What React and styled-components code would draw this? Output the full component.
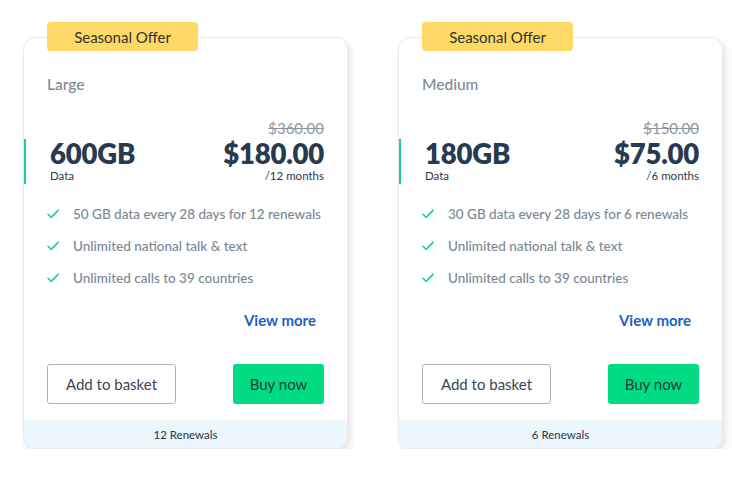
import React from "react";
import styled, { createGlobalStyle } from "styled-components";

const Global = createGlobalStyle`
  html, body { margin: 0; padding: 0; background: #ffffff; }
  body { font-family: Lato, "Open Sans", sans-serif; color: #2b3a4d; }
  * { box-sizing: border-box; }
`;

const Page = styled.div`
  display: flex;
  gap: 50px;
  padding: 37px 0 0 23px;
`;

const CardWrap = styled.div`
  position: relative;
  width: 325px;
`;

const Badge = styled.div`
  position: absolute;
  top: -15px;
  left: 24px;
  width: 151px;
  height: 29px;
  background: #ffd965;
  border-radius: 4px;
  display: flex;
  align-items: center;
  justify-content: center;
  font-size: 15px;
  color: #2f3338;
  z-index: 2;
`;

const Card = styled.div`
  height: 412px;
  border: 1px solid #e7e9ec;
  border-radius: 12px;
  background: #fff;
  box-shadow: 3px 4px 6px rgba(0, 0, 0, 0.1);
  display: flex;
  flex-direction: column;
  overflow: hidden;
`;

const Body = styled.div`
  flex: 1;
  padding: 36px 23px 0 23px;
  display: flex;
  flex-direction: column;
`;

const PlanName = styled.div`
  font-size: 15.5px;
  line-height: 20px;
  color: #7d8896;
  font-weight: 500;
`;

const PriceRow = styled.div`
  margin-top: 24px;
  display: flex;
  justify-content: space-between;
  align-items: flex-end;
`;

const DataBlock = styled.div`
  margin-left: -24px;
  padding-left: 24px;
  border-left: 3px solid #1fd08b;
  display: flex;
  flex-direction: column;
  height: 45px;
  justify-content: flex-start;
`;

const Big = styled.div`
  font-size: 27.5px;
  line-height: 30px;
  font-weight: 800;
  color: #273a50;
  letter-spacing: -0.2px;
`;

const Small = styled.div`
  font-size: 11.5px;
  line-height: 14px;
  color: #2b3a4d;
`;

const PriceBlock = styled.div`
  display: flex;
  flex-direction: column;
  align-items: flex-end;
  height: 66px;
`;

const OldPrice = styled.div`
  font-size: 15px;
  line-height: 20px;
  color: #8c97a4;
  text-decoration: line-through;
  margin-bottom: 1px;
`;

const Features = styled.ul`
  list-style: none;
  margin: 14px 0 0 0;
  padding: 0;
  display: flex;
  flex-direction: column;
`;

const Feature = styled.li`
  display: flex;
  align-items: center;
  gap: 14px;
  height: 32px;
  font-size: 13.5px;
  color: #7b8794;
  font-weight: 500;
`;

const ViewMore = styled.a`
  align-self: flex-end;
  margin: 16px 8px 0 0;
  font-size: 15px;
  line-height: 20px;
  font-weight: 700;
  color: #1b5fc9;
  text-decoration: none;
`;

const Actions = styled.div`
  margin-top: 34px;
  display: flex;
  justify-content: space-between;
`;

const OutlineButton = styled.button`
  height: 40px;
  width: 129px;
  border: 1px solid #a9b4c0;
  border-radius: 3px;
  background: #fff;
  font-family: inherit;
  font-size: 15px;
  color: #3b4652;
  cursor: pointer;
`;

const PrimaryButton = styled.button`
  height: 40px;
  width: 91px;
  border: none;
  border-radius: 3px;
  background: #00dc84;
  font-family: inherit;
  font-size: 15px;
  color: #1d3b3a;
  cursor: pointer;
`;

const Footer = styled.div`
  height: 28px;
  background: #ebf6fd;
  display: flex;
  align-items: center;
  justify-content: center;
  font-size: 11.5px;
  color: #2b3440;
`;

const Check = () => (
  <svg width="12" height="10" viewBox="0 0 12 10" fill="none">
    <path d="M1 5.2 L4.3 8.4 L11 1.4" stroke="#1fd08b" strokeWidth="1.6" strokeLinecap="round" strokeLinejoin="round" />
  </svg>
);

const plans = [
  {
    name: "Large",
    data: "600GB",
    old: "$360.00",
    price: "$180.00",
    period: "/12 months",
    features: ["50 GB data every 28 days for 12 renewals", "Unlimited national talk & text", "Unlimited calls to 39 countries"],
    renewals: "12 Renewals",
  },
  {
    name: "Medium",
    data: "180GB",
    old: "$150.00",
    price: "$75.00",
    period: "/6 months",
    features: ["30 GB data every 28 days for 6 renewals", "Unlimited national talk & text", "Unlimited calls to 39 countries"],
    renewals: "6 Renewals",
  },
];

export default function App() {
  return (
    <>
      <Global />
      <Page>
        {plans.map((p) => (
          <CardWrap key={p.name}>
            <Badge>Seasonal Offer</Badge>
            <Card>
              <Body>
                <PlanName>{p.name}</PlanName>
                <PriceRow>
                  <DataBlock>
                    <Big>{p.data}</Big>
                    <Small>Data</Small>
                  </DataBlock>
                  <PriceBlock>
                    <OldPrice>{p.old}</OldPrice>
                    <Big>{p.price}</Big>
                    <Small>{p.period}</Small>
                  </PriceBlock>
                </PriceRow>
                <Features>
                  {p.features.map((f) => (
                    <Feature key={f}>
                      <Check />
                      {f}
                    </Feature>
                  ))}
                </Features>
                <ViewMore href="#">View more</ViewMore>
                <Actions>
                  <OutlineButton>Add to basket</OutlineButton>
                  <PrimaryButton>Buy now</PrimaryButton>
                </Actions>
              </Body>
              <Footer>{p.renewals}</Footer>
            </Card>
          </CardWrap>
        ))}
      </Page>
    </>
  );
}
